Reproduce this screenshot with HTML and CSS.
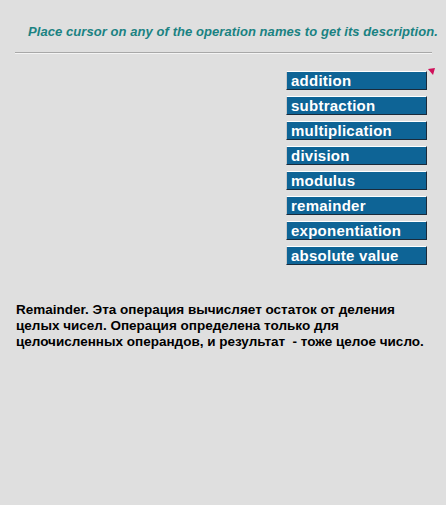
FILE: index.html
```html
<!DOCTYPE html>
<html>
<head>
<meta charset="utf-8">
<link rel="stylesheet" href="styles.css">
</head>
<body>
<div class="page">
  <p class="hint">Place cursor on any of the operation names to get its description.</p>
  <div class="rule"></div>
  <div class="menu-wrap">
    <ul class="menu">
      <li class="op">addition</li>
      <li class="op">subtraction</li>
      <li class="op">multiplication</li>
      <li class="op">division</li>
      <li class="op">modulus</li>
      <li class="op">remainder</li>
      <li class="op">exponentiation</li>
      <li class="op">absolute value</li>
    </ul>
    <svg class="cursor" width="8" height="8" viewBox="0 0 8 8"><polygon points="0,1 7,0 5,7" fill="#d0105a"/></svg>
  </div>
  <p class="desc">Remainder. Эта операция вычисляет остаток от деления<br>целых чисел. Операция определена только для<br>целочисленных операндов, и результат &nbsp;- тоже целое число.</p>
</div>
</body>
</html>
```
FILE: styles.css
```css
html, body {
  margin: 0;
  padding: 0;
  background: #dfdfdf;
}
.page {
  width: 446px;
  height: 505px;
  overflow: hidden;
  font-family: "Liberation Sans", Arial, sans-serif;
}
.hint {
  margin: 0;
  padding: 24px 0 0 28px;
  font-size: 13px;
  letter-spacing: 0.07px;
  font-weight: bold;
  font-style: italic;
  color: #1a8282;
  line-height: 16px;
  white-space: nowrap;
}
.rule {
  margin: 12px 14px 0 15px;
  height: 1px;
  background: #a8a8a8;
  border-bottom: 1px solid #f4f4f4;
}
.menu-wrap {
  display: flex;
  justify-content: flex-end;
  align-items: flex-start;
  padding: 14px 10px 0 0;
}
.menu {
  list-style: none;
  margin: 3px 0 0 0;
  padding: 0;
  display: flex;
  flex-direction: column;
  gap: 6px;
}
.op {
  width: 135px;
  height: 17px;
  background: #0e6496;
  color: #fff;
  font-weight: bold;
  font-size: 15px;
  letter-spacing: 0.25px;
  line-height: 17px;
  padding-left: 4px;
  border-top: 1px solid #fff;
  border-left: 1px solid #c8c8c8;
  border-right: 1px solid #1a2a3a;
  border-bottom: 1px solid #1a2a3a;
  white-space: nowrap;
}
.cursor {
  margin-left: 1px;
  margin-top: 0;
}
.desc {
  margin: 37px 0 0 16px;
  font-size: 13.5px;
  font-weight: bold;
  line-height: 16px;
  color: #000;
  white-space: nowrap;
}
```
